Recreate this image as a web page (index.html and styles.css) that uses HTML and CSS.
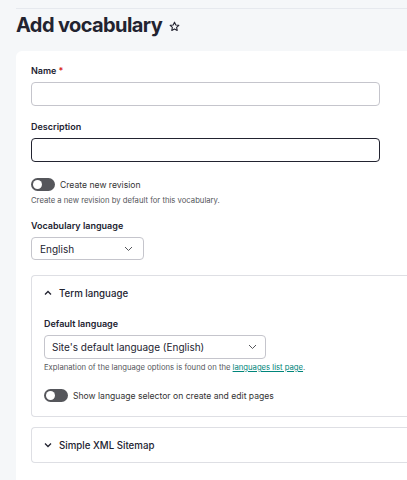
FILE: index.html
```html
<!DOCTYPE html>
<html>
<head>
    <title>Add vocabulary</title>
    <link rel="stylesheet" href="styles.css">
</head>
<body>
    <div class="page">
        <div class="topbar"></div>
        <h1 class="title">Add vocabulary
            <svg class="star" width="11" height="11" viewBox="0 0 24 24"><path d="M12 2.5l2.9 6.1 6.6.8-4.9 4.6 1.3 6.6L12 17.3l-5.9 3.3 1.3-6.6-4.9-4.6 6.6-.8z" fill="none" stroke="#222330" stroke-width="2.4" stroke-linejoin="round"/></svg>
        </h1>
        <div class="card">
            <div class="field">
                <label class="label">Name<span class="req">*</span></label>
                <input type="text" class="input">
            </div>
            <div class="field">
                <label class="label">Description</label>
                <input type="text" class="input focused">
            </div>
            <div class="toggle-row">
                <span class="toggle"></span>
                <span class="toggle-text">Create new revision</span>
            </div>
            <div class="help">Create a new revision by default for this vocabulary.</div>
            <div class="field">
                <label class="label">Vocabulary language</label>
                <div class="select small">English
                    <svg class="chev" width="9" height="6" viewBox="0 0 9 6"><path d="M1 1l3.5 3.5L8 1" fill="none" stroke="#55565b" stroke-width="1"/></svg>
                </div>
            </div>
            <div class="details">
                <div class="summary">
                    <svg width="8" height="6" viewBox="0 0 8 6"><path d="M1 4.5L4 1.5l3 3" fill="none" stroke="#222330" stroke-width="1.3"/></svg>
                    Term language
                </div>
                <div class="details-body">
                    <label class="label">Default language</label>
                    <div class="select wide">Site's default language (English)
                        <svg class="chev" width="9" height="6" viewBox="0 0 9 6"><path d="M1 1l3.5 3.5L8 1" fill="none" stroke="#55565b" stroke-width="1"/></svg>
                    </div>
                    <div class="help">Explanation of the language options is found on the <a href="#">languages list page</a>.</div>
                    <div class="toggle-row">
                        <span class="toggle"></span>
                        <span class="toggle-text">Show language selector on create and edit pages</span>
                    </div>
                </div>
            </div>
            <div class="details">
                <div class="summary">
                    <svg width="8" height="6" viewBox="0 0 8 6"><path d="M1 1.5l3 3 3-3" fill="none" stroke="#222330" stroke-width="1.3"/></svg>
                    Simple XML Sitemap
                </div>
            </div>
        </div>
    </div>
</body>
</html>
```

FILE: styles.css
```css
body {
    margin: 0;
    background-color: #f5f7f9;
    color: #222330;
    font-family: Inter, "Noto Sans", sans-serif;
    overflow: hidden;
}
.page {
    padding-left: 16px;
    height: 480px;
}
.topbar {
    height: 8px;
    border-bottom: 1px solid #e6e9ee;
}
.title {
    font-size: 20px;
    line-height: 26px;
    font-weight: 700;
    letter-spacing: -0.6px;
    margin: 3px 0 13px 0;
    display: flex;
    align-items: center;
    gap: 7px;
}
.star {
    margin-top: 2px;
}
.card {
    background: white;
    border-radius: 6px 0 0 0;
    width: 391px;
    height: 429px;
    padding: 14px 0 0 15px;
    box-sizing: border-box;
}
.field {
    margin-bottom: 15px;
}
.label {
    display: block;
    font-size: 9px;
    line-height: 12px;
    font-weight: 600;
    margin-bottom: 5px;
}
.req {
    color: #d72222;
    margin-left: 2px;
}
.input {
    display: block;
    width: 349px;
    height: 24px;
    box-sizing: border-box;
    border: 1px solid #c5c5cc;
    border-radius: 4px;
    margin: 0;
    padding: 0 8px;
}
.input.focused {
    border: 1px solid #222330;
}
.field:nth-child(2) {
    margin-bottom: 16px;
}
.toggle-row {
    display: flex;
    align-items: center;
    gap: 5px;
    height: 13px;
}
.toggle {
    width: 24px;
    height: 13px;
    border-radius: 7px;
    background: #55565b;
    position: relative;
    flex-shrink: 0;
}
.toggle::after {
    content: "";
    position: absolute;
    left: 2px;
    top: 2px;
    width: 9px;
    height: 9px;
    border-radius: 50%;
    background: white;
}
.toggle-text {
    font-size: 8.6px;
    color: #333;
}
.help {
    font-size: 7.7px;
    line-height: 9px;
    color: #55565b;
    margin: 5px 0 15px 0;
}
.help a {
    color: #00857a;
}
.select {
    height: 23px;
    box-sizing: border-box;
    border: 1px solid #c5c5cc;
    border-radius: 4px;
    display: flex;
    align-items: center;
    justify-content: space-between;
    padding: 0 10px 0 8px;
    font-size: 10px;
}
.select.small {
    width: 113px;
}
.select.wide {
    width: 222px;
    height: 24px;
    padding-left: 7px;
    padding-right: 8px;
}
.details {
    border: 1px solid #dedfe4;
    border-right: none;
    border-radius: 4px 0 0 4px;
    margin-bottom: 10px;
}
.summary {
    display: flex;
    align-items: center;
    gap: 7px;
    height: 34px;
    padding-left: 12px;
    font-size: 9.7px;
    font-weight: 500;
}
.details-body {
    padding: 8px 0 14px 12px;
}
.details-body .help {
    margin: 4px 0 17px 0;
}
```
